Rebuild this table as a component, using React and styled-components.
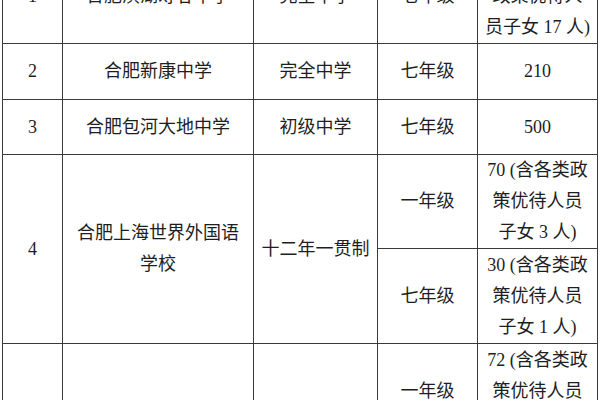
import React from "react";
import styled, { createGlobalStyle } from "styled-components";

const Global = createGlobalStyle`
  html, body { margin: 0; padding: 0; background: #fff; }
  body { width: 600px; height: 400px; overflow: hidden; }
`;

const Page = styled.div`
  width: 600px;
  height: 400px;
  overflow: hidden;
  background: #fff;
`;

const Table = styled.table`
  margin: -52px 0 0 2px;
  width: 596px;
  border-collapse: collapse;
  table-layout: fixed;
  font-family: "Liberation Serif", "Noto Sans CJK SC", serif;
  font-size: 18px;
  line-height: 31px;
  color: #1e1e1e;
`;

const Row = styled.tr`
  height: ${(p) => p.$h}px;
`;

const Cell = styled.td`
  border: 1px solid #3a3a3a;
  text-align: center;
  vertical-align: middle;
  padding: 0 ${(p) => (p.$wide ? 10 : 3)}px;
  word-break: break-all;
`;

const Line = styled.span`
  display: block;
  white-space: nowrap;
`;

const Lines = ({ items }) => (
  <>
    {items.map((t, i) => (
      <Line key={i}>{t}</Line>
    ))}
  </>
);

export default function App() {
  return (
    <Page>
      <Global />
      <Table>
        <colgroup>
          <col style={{ width: 60 }} />
          <col style={{ width: 191 }} />
          <col style={{ width: 124 }} />
          <col style={{ width: 100 }} />
          <col style={{ width: 120 }} />
        </colgroup>
        <tbody>
          <Row $h={95}>
            <Cell>1</Cell>
            <Cell $wide>合肥滨湖寿春中学</Cell>
            <Cell>完全中学</Cell>
            <Cell>七年级</Cell>
            <Cell>
              <Lines items={["250 (含各类", "政策优待人", "员子女 17 人)"]} />
            </Cell>
          </Row>
          <Row $h={56}>
            <Cell>2</Cell>
            <Cell $wide>合肥新康中学</Cell>
            <Cell>完全中学</Cell>
            <Cell>七年级</Cell>
            <Cell>210</Cell>
          </Row>
          <Row $h={55}>
            <Cell>3</Cell>
            <Cell $wide>合肥包河大地中学</Cell>
            <Cell>初级中学</Cell>
            <Cell>七年级</Cell>
            <Cell>500</Cell>
          </Row>
          <Row $h={94}>
            <Cell rowSpan={2}>4</Cell>
            <Cell rowSpan={2} $wide>
              合肥上海世界外国语学校
            </Cell>
            <Cell rowSpan={2}>十二年一贯制</Cell>
            <Cell>一年级</Cell>
            <Cell>
              <Lines items={["70 (含各类政", "策优待人员", "子女 3 人)"]} />
            </Cell>
          </Row>
          <Row $h={95}>
            <Cell>七年级</Cell>
            <Cell>
              <Lines items={["30 (含各类政", "策优待人员", "子女 1 人)"]} />
            </Cell>
          </Row>
          <Row $h={95}>
            <Cell rowSpan={2}>5</Cell>
            <Cell rowSpan={2} $wide>
              合肥一六八玫瑰园学校（含小学部、初中部）
            </Cell>
            <Cell rowSpan={2}>九年一贯制</Cell>
            <Cell>一年级</Cell>
            <Cell>
              <Lines items={["72 (含各类政", "策优待人员", "子女 2 人)"]} />
            </Cell>
          </Row>
          <Row $h={108}>
            <Cell>七年级</Cell>
            <Cell>
              <Lines items={["40 (含各类政", "策优待人员", "子女 1 人)"]} />
            </Cell>
          </Row>
        </tbody>
      </Table>
    </Page>
  );
}
